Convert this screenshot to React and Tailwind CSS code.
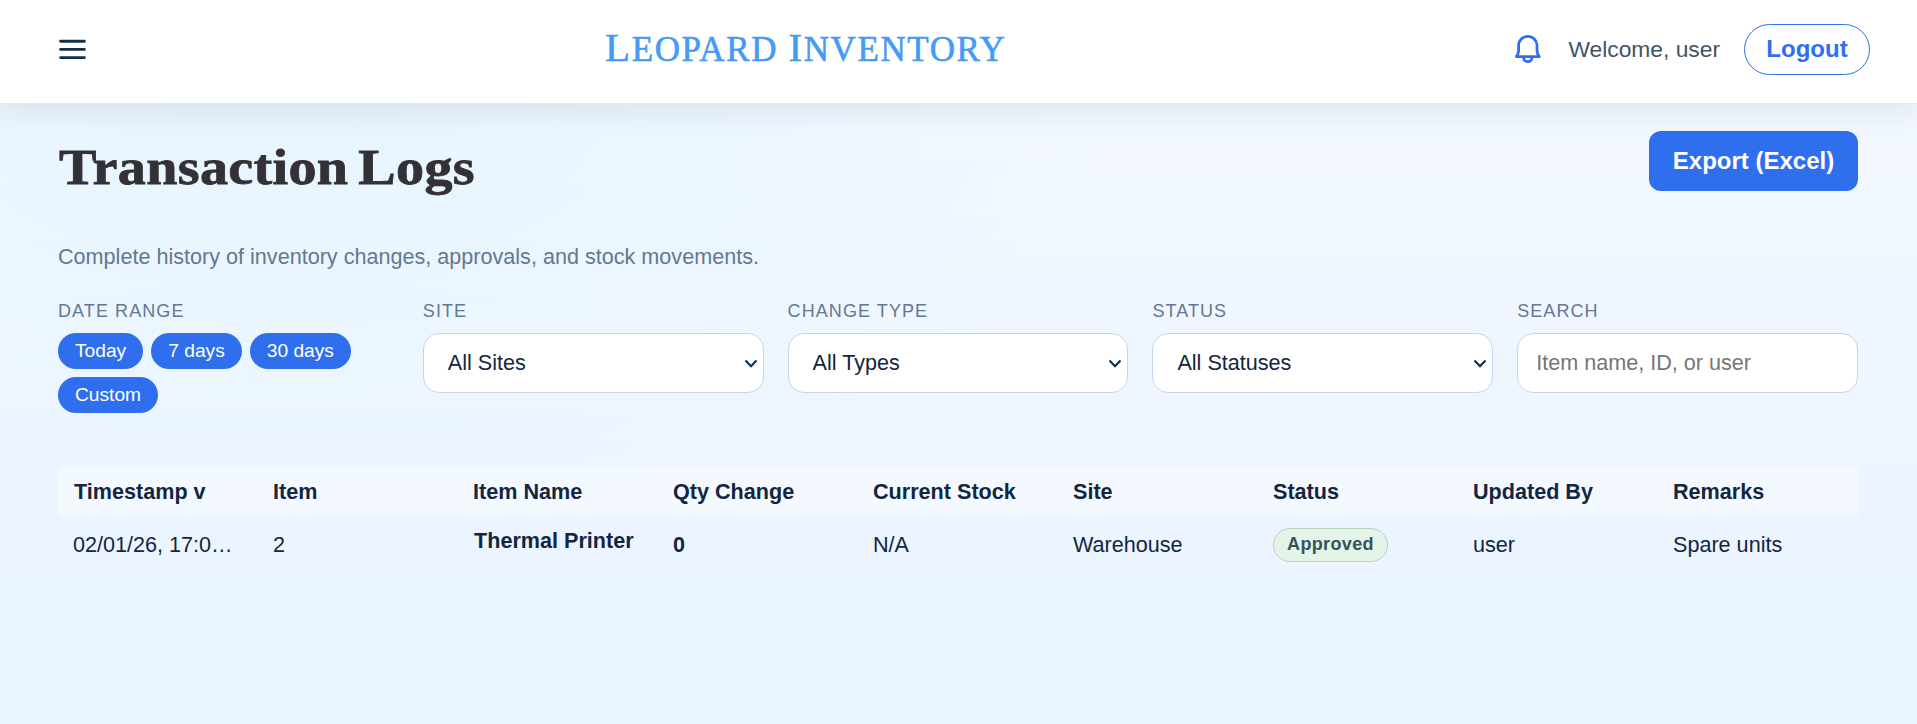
import React from 'react';

const ranges = ['Today', '7 days', '30 days', 'Custom'];

const selects = [
    { label: 'Site', value: 'All Sites' },
    { label: 'Change Type', value: 'All Types' },
    { label: 'Status', value: 'All Statuses' },
];

const columns = [
    'Timestamp v', 'Item', 'Item Name', 'Qty Change', 'Current Stock',
    'Site', 'Status', 'Updated By', 'Remarks',
];

const logs = [
    {
        id: 1,
        timestamp: '02/01/26, 17:04:12',
        item: '2',
        name: 'Thermal Printer',
        qty: '0',
        stock: 'N/A',
        site: 'Warehouse',
        status: 'Approved',
        user: 'user',
        remarks: 'Spare units',
    },
];

function Header() {
    return (
        <header className="relative flex h-[104px] items-start border-b border-[#dfe8f3] bg-white pl-[59px] pr-[47px] shadow-[0_9px_26px_rgba(15,23,42,0.08)]">
            <button className="mt-[39px] w-[27px]" aria-label="Menu">
                <svg width="27" height="22" viewBox="0 0 27 22" fill="none" stroke="#12304a" strokeWidth="2.9" strokeLinecap="round">
                    <path d="M1.6 2.2h23.8M1.6 10.4h23.8M1.6 18.6h23.8" />
                </svg>
            </button>
            <div className="mt-6 ml-[519px] whitespace-nowrap font-['Liberation_Serif',serif] text-[35px] leading-[46px] tracking-[1.6px] text-[#469af7] [-webkit-text-stroke:0.6px_#469af7]">
                <span className="text-[41px]">L</span>EOPARD <span className="text-[41px]">I</span>NVENTORY
            </div>
            <div className="mt-6 ml-auto flex items-center">
                <svg className="mb-0.5" width="28" height="30" viewBox="0 0 28 30" fill="none" stroke="#2f6fed" strokeWidth="2.8" strokeLinecap="round" strokeLinejoin="round">
                    <path d="M1.400 22.600c1.300-1.600 2.100-2.900 2.200-6v-5a9.200 9.200 0 0 1 18.400 0v5c.1 3.100.9 4.400 2.200 6z" />
                    <path d="M8.600 23.600a4.200 4 0 0 0 8.400 0" />
                </svg>
                <span className="ml-[25px] text-[22.8px] text-[#3f5566]">Welcome, user</span>
                <button className="ml-6 h-[51px] w-[126px] rounded-full border border-[#2f6fed] pb-0.5 text-2xl font-bold text-[#2f6fed]">
                    Logout
                </button>
            </div>
        </header>
    );
}

function FilterLabel({ children }) {
    return (
        <div className="mb-2 text-lg leading-[27px] tracking-[0.06em] text-[#64788f] uppercase">{children}</div>
    );
}

function Filters() {
    return (
        <div className="mt-[25px] grid grid-cols-5 gap-6">
            <div>
                <FilterLabel>Date Range</FilterLabel>
                <div className="flex flex-wrap gap-2">
                    {ranges.map((range) => (
                        <button key={range} className="h-9 rounded-full bg-[#2f6fed] px-[17px] text-[19.2px] text-white">
                            {range}
                        </button>
                    ))}
                </div>
            </div>

            {selects.map((select) => (
                <div key={select.label}>
                    <FilterLabel>{select.label}</FilterLabel>
                    <button className="flex h-[60px] w-full items-center justify-between rounded-2xl border border-[#c5d5f0] bg-white pt-px pr-1 pl-6 text-[#12263f]">
                        {select.value}
                        <svg width="16" height="10" viewBox="0 0 16 10" fill="none" stroke="#12304a" strokeWidth="2.2">
                            <path d="M2.500 1.600l5.500 5.600 5.500-5.600" />
                        </svg>
                    </button>
                </div>
            ))}

            <div>
                <FilterLabel>Search</FilterLabel>
                <input
                    type="text"
                    placeholder="Item name, ID, or user"
                    className="h-[60px] w-full rounded-2xl border border-[#c5d5f0] bg-white px-[18px] placeholder:text-[#757575]"
                />
            </div>
        </div>
    );
}

function LogTable() {
    return (
        <table className="mt-[54px] w-full table-fixed text-left leading-[30px] text-[#12263f]">
            <thead>
                <tr className="h-[49px] bg-[#f4f9ff]">
                    {columns.map((column) => (
                        <th key={column} className="px-[15px] font-bold first:pl-4">{column}</th>
                    ))}
                </tr>
            </thead>
            <tbody>
                {logs.map((log) => (
                    <tr key={log.id} className="h-[57px]">
                        <td className="truncate pr-[22px] pl-[15px]">{log.timestamp}</td>
                        <td className="px-[15px]">{log.item}</td>
                        <td className="pr-[15px] pb-2 pl-4 font-bold whitespace-nowrap">{log.name}</td>
                        <td className="px-[15px] font-bold">{log.qty}</td>
                        <td className="px-[15px]">{log.stock}</td>
                        <td className="px-[15px]">{log.site}</td>
                        <td className="px-[15px]">
                            <span className="flex h-[34px] w-[115px] items-center justify-center rounded-full border border-[#b7d3bf] bg-[#e4f4e7] pb-0.5 text-lg font-bold tracking-[0.02em] text-[#35545c]">
                                {log.status}
                            </span>
                        </td>
                        <td className="px-[15px]">{log.user}</td>
                        <td className="px-[15px]">{log.remarks}</td>
                    </tr>
                ))}
            </tbody>
        </table>
    );
}

export default function App() {
    return (
        <div className="h-screen overflow-hidden bg-[radial-gradient(820px_400px_at_15%_15%,#e6f5ff_0%,transparent_100%),linear-gradient(180deg,#f5f9ff_0%,#eaf4ff_85%)] font-['Liberation_Sans',Arial,sans-serif] text-[21.6px]">
            <Header />
            <main className="ml-[58px] w-[1800px] pt-[27px]">
                <div className="flex items-start justify-between">
                    <h1 className="ml-px origin-left scale-x-[1.1] font-['Liberation_Serif',serif] text-[51px] leading-[72px] font-bold tracking-[0.3px] text-[#333136] [word-spacing:-4px] [-webkit-text-stroke:0.8px_#333136]">
                        Transaction Logs
                    </h1>
                    <button className="h-[60px] w-[209px] rounded-xl bg-[#2f6fed] text-2xl font-bold text-white">
                        Export (Excel)
                    </button>
                </div>
                <p className="mt-[38px] leading-[32px] text-[#64788f]">
                    Complete history of inventory changes, approvals, and stock movements.
                </p>
                <Filters />
                <LogTable />
            </main>
        </div>
    );
}
